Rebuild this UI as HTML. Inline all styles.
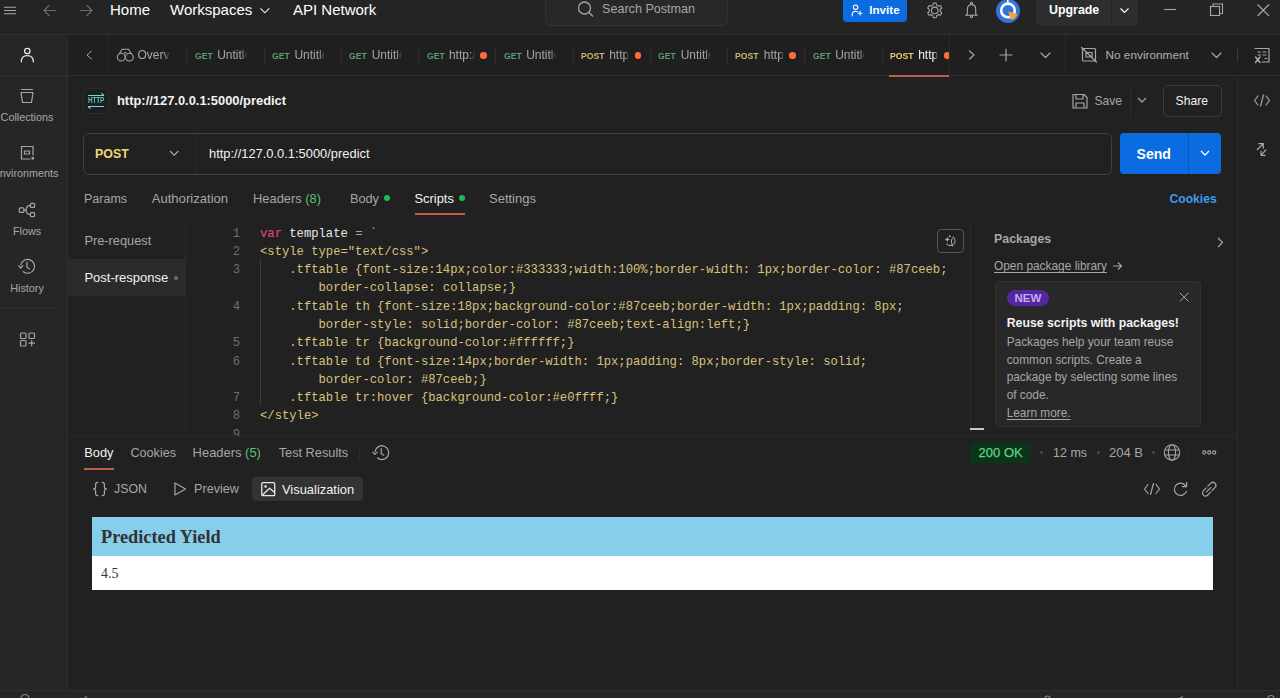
<!DOCTYPE html>
<html><head><meta charset="utf-8">
<style>
*{box-sizing:border-box;margin:0;padding:0}
html,body{width:1280px;height:698px;overflow:hidden;background:#212121;font-family:"Liberation Sans",sans-serif;color:#fff}
.a{position:absolute;white-space:nowrap}
.ln{position:absolute;background:#303030}
.g{color:#a6a6a6}
svg{position:absolute;overflow:visible}
.mono{font-family:"Liberation Mono",monospace}
</style></head><body>

<!-- TOP BAR -->
<div class="a" style="left:0;top:0;width:1280px;height:34px;background:#242424"></div>
<div class="a" style="left:68px;top:35px;width:1212px;height:40px;background:#1f1f1f"></div>
<div class="ln" style="left:0;top:34px;width:1280px;height:1px"></div>
<svg style="left:0;top:0" width="1280" height="34">
  <g stroke="#a6a6a6" stroke-width="1.3" fill="none">
    <path d="M4 7.3H16M4 10.5H16M4 13.7H16" stroke-width="1.1"/>
  </g>
  <g stroke="#6b6b6b" stroke-width="1.2" fill="none" stroke-linecap="round" stroke-linejoin="round">
    <path d="M56 10.5H44M49 5.5L44 10.5L49 15.5"/>
    <path d="M80 10.5H92M87 5.5L92 10.5L87 15.5"/>
  </g>
</svg>
<div class="a" style="left:110px;top:0;line-height:20px;font-size:15px">Home</div>
<div class="a" style="left:170px;top:0;line-height:20px;font-size:15px">Workspaces</div>
<svg style="left:0;top:0" width="1" height="1"><path d="M260.5 8.4L264.9 12.8L269.3 8.4" stroke="#f0f0f0" stroke-width="1.1" fill="none"/></svg>
<div class="a" style="left:293px;top:0;line-height:20px;font-size:15px">API Network</div>

<div class="a" style="left:545px;top:-8px;width:183px;height:34px;background:#282828;border:1px solid #343434;border-radius:6px"></div>
<svg style="left:0;top:0" width="1" height="1"><g stroke="#a6a6a6" stroke-width="1.3" fill="none"><circle cx="584.5" cy="8" r="6"/><path d="M589 12.5L593 16.5"/></g></svg>
<div class="a g" style="left:602px;top:-1px;line-height:20px;font-size:12.6px">Search Postman</div>

<div class="a" style="left:843px;top:-6px;width:64px;height:28px;background:#0a6ce0;border-radius:4px"></div>
<svg style="left:0;top:0" width="1" height="1"><g stroke="#fff" stroke-width="1.1" fill="none"><circle cx="855.6" cy="7.2" r="2.2"/><path d="M852.2 16.2V14.6C852.2 12.6 853.7 11.3 855.6 11.3C856.5 11.3 857.2 11.6 857.8 12M857.6 13.2H862.4M860 10.8V15.6"/></g></svg>
<div class="a" style="left:869.3px;top:-0.6px;line-height:21px;font-size:11.6px;font-weight:bold">Invite</div>

<svg style="left:0;top:0" width="1" height="1"><g stroke="#a6a6a6" stroke-width="1.1" fill="none" stroke-linejoin="round">
  <path d="M932.93 5.11 L933.32 3.04 L936.18 3.04 L936.57 5.11 L938.42 6.17 L940.41 5.48 L941.84 7.96 L940.25 9.33 L940.25 11.47 L941.84 12.84 L940.41 15.32 L938.42 14.63 L936.57 15.69 L936.18 17.76 L933.32 17.76 L932.93 15.69 L931.08 14.63 L929.09 15.32 L927.66 12.84 L929.25 11.47 L929.25 9.33 L927.66 7.96 L929.09 5.48 L931.08 6.17Z"/>
  <circle cx="934.75" cy="10.4" r="3.3"/>
  <path d="M967.3 14.3V9.5C967.3 6.5 969 4.6 971.5 4.6C974 4.6 975.7 6.5 975.7 9.5V14.3L977.2 15.2H965.8Z"/>
  <circle cx="971.5" cy="3.3" r="1"/><circle cx="971.5" cy="16.6" r="1.1"/>
</g></svg>
<div class="a" style="left:996px;top:-1.5px;width:24px;height:24px;border-radius:50%;background:#3474d8"></div>
<svg style="left:0;top:0" width="1" height="1"><g fill="none" stroke="#fff" stroke-width="2.6"><circle cx="1008" cy="10.4" r="6.8"/></g><path d="M1007.8 -1V2.8" stroke="#fff" stroke-width="1.6"/><path d="M1008.3 11.2L1012.5 12.6L1017.6 14.6L1014.5 18.8L1010.5 19.8Z" fill="#f2a53a"/></svg>

<div class="a" style="left:1036px;top:-8px;width:102px;height:34px;background:#2e2e2e;border-radius:6px"></div>
<div class="ln" style="left:1111px;top:0;width:1px;height:26px;background:#262626"></div>
<div class="a" style="left:1049px;top:0;line-height:21px;font-size:12.4px;font-weight:bold">Upgrade</div>
<svg style="left:0;top:0" width="1" height="1"><g stroke="#fff" stroke-width="1.2" fill="none"><path d="M1120.5 8.5L1124.5 12.5L1128.5 8.5"/></g>
 <g stroke="#a6a6a6" stroke-width="1.1" fill="none"><path d="M1164 9.5H1176"/><rect x="1210.5" y="6.5" width="9" height="9"/><path d="M1213 6.5V4H1222.5V13.5H1219.5"/><path d="M1257.5 4.5L1269 16M1269 4.5L1257.5 16"/></g></svg>

<!-- LEFT SIDEBAR -->
<div class="a" style="left:0;top:35px;width:67px;height:655px;background:#262626"></div>
<div class="ln" style="left:67px;top:35px;width:1px;height:655px;background:#2c2c2c"></div>
<div class="ln" style="left:0;top:76px;width:67px;height:1px"></div>
<div class="ln" style="left:0;top:308px;width:56px;height:1px"></div>

<!-- BOTTOM BAR -->
<div class="a" style="left:0;top:691px;width:1280px;height:7px;background:#252525"></div>
<div class="ln" style="left:0;top:690px;width:1280px;height:1px;background:#2e2e2e"></div>
<svg style="left:0;top:0" width="1" height="1"><g stroke="#8a8a8a" stroke-width="1.2" fill="none"><path d="M21 698.5A4 4 0 0 1 29 698.5M84 698.5L87 696.5M1045 698.5A2.5 2.5 0 0 1 1050 698.5M1179 698.5L1183 696.5M1268 698.5A3 3 0 0 1 1274 698.5"/></g></svg>

<!-- TAB BAR -->
<div class="ln" style="left:68px;top:75px;width:1212px;height:1px"></div>
<div class="ln" style="left:108px;top:35px;width:1px;height:40px;background:#2a2a2a"></div>

<!-- RIGHT SIDEBAR -->
<div class="ln" style="left:1237px;top:76px;width:1px;height:614px;background:#2a2a2a"></div>

<div id="content"></div>
<!-- TAB BAR CONTENT -->
<svg style="left:0;top:0" width="1" height="1"><g stroke="#a6a6a6" stroke-width="1.2" fill="none" stroke-linecap="round" stroke-linejoin="round">
  <path d="M91.5 51L87 55L91.5 59" stroke-width="1"/>
  <circle cx="121.2" cy="57.1" r="3.9" stroke-width="1.05"/><circle cx="129.4" cy="57.1" r="3.9" stroke-width="1.05"/>
  <path d="M119.4 53.8L122 49.3H128.6L131.2 53.8" stroke-width="1.05"/><path d="M124.4 52.9L125.3 51.9L126.2 52.9Z" fill="#a6a6a6" stroke-width="0.6"/>
</g></svg>
<div class="a" style="left:137.5px;top:45px;width:32px;overflow:hidden;-webkit-mask-image:linear-gradient(90deg,#000 82%,transparent);line-height:20px;font-size:12px;color:#a6a6a6">Overview</div>
<div class="ln" style="left:186.4px;top:48px;width:1px;height:16px;background:#2c2c2c"></div>
<div class="a" style="left:194.9px;top:45.6px;line-height:20px;font-size:9.95px;font-weight:bold;color:#5c9f72;transform:scaleX(0.87);transform-origin:0 0">GET</div>
<div class="a" style="left:217.2px;top:45px;width:30.2px;overflow:hidden;-webkit-mask-image:linear-gradient(90deg,#000 82%,transparent);line-height:20px;font-size:12px;color:#a6a6a6">Untitle</div>
<div class="ln" style="left:263.6px;top:48px;width:1px;height:16px;background:#2c2c2c"></div>
<div class="a" style="left:272.1px;top:45.6px;line-height:20px;font-size:9.95px;font-weight:bold;color:#5c9f72;transform:scaleX(0.87);transform-origin:0 0">GET</div>
<div class="a" style="left:294.4px;top:45px;width:30.2px;overflow:hidden;-webkit-mask-image:linear-gradient(90deg,#000 82%,transparent);line-height:20px;font-size:12px;color:#a6a6a6">Untitle</div>
<div class="ln" style="left:340.9px;top:48px;width:1px;height:16px;background:#2c2c2c"></div>
<div class="a" style="left:349.4px;top:45.6px;line-height:20px;font-size:9.95px;font-weight:bold;color:#5c9f72;transform:scaleX(0.87);transform-origin:0 0">GET</div>
<div class="a" style="left:371.7px;top:45px;width:30.2px;overflow:hidden;-webkit-mask-image:linear-gradient(90deg,#000 82%,transparent);line-height:20px;font-size:12px;color:#a6a6a6">Untitle</div>
<div class="ln" style="left:418.1px;top:48px;width:1px;height:16px;background:#2c2c2c"></div>
<div class="a" style="left:426.6px;top:45.6px;line-height:20px;font-size:9.95px;font-weight:bold;color:#5c9f72;transform:scaleX(0.87);transform-origin:0 0">GET</div>
<div class="a" style="left:448.9px;top:45px;width:26.0px;overflow:hidden;-webkit-mask-image:linear-gradient(90deg,#000 82%,transparent);line-height:20px;font-size:12px;color:#a6a6a6">http://</div>
<div class="a" style="left:480.35px;top:52px;width:6.6px;height:6.6px;border-radius:50%;background:#ff6c37"></div>
<div class="ln" style="left:495.4px;top:48px;width:1px;height:16px;background:#2c2c2c"></div>
<div class="a" style="left:503.9px;top:45.6px;line-height:20px;font-size:9.95px;font-weight:bold;color:#5c9f72;transform:scaleX(0.87);transform-origin:0 0">GET</div>
<div class="a" style="left:526.2px;top:45px;width:30.2px;overflow:hidden;-webkit-mask-image:linear-gradient(90deg,#000 82%,transparent);line-height:20px;font-size:12px;color:#a6a6a6">Untitle</div>
<div class="ln" style="left:572.6px;top:48px;width:1px;height:16px;background:#2c2c2c"></div>
<div class="a" style="left:580.8px;top:45.6px;line-height:20px;font-size:9.95px;font-weight:bold;color:#cdb86c;transform:scaleX(0.87);transform-origin:0 0">POST</div>
<div class="a" style="left:609.2px;top:45px;width:20.2px;overflow:hidden;-webkit-mask-image:linear-gradient(90deg,#000 82%,transparent);line-height:20px;font-size:12px;color:#a6a6a6">http://</div>
<div class="a" style="left:634.85px;top:52px;width:6.6px;height:6.6px;border-radius:50%;background:#ff6c37"></div>
<div class="ln" style="left:649.9px;top:48px;width:1px;height:16px;background:#2c2c2c"></div>
<div class="a" style="left:658.4px;top:45.6px;line-height:20px;font-size:9.95px;font-weight:bold;color:#5c9f72;transform:scaleX(0.87);transform-origin:0 0">GET</div>
<div class="a" style="left:680.7px;top:45px;width:30.2px;overflow:hidden;-webkit-mask-image:linear-gradient(90deg,#000 82%,transparent);line-height:20px;font-size:12px;color:#a6a6a6">Untitle</div>
<div class="ln" style="left:727.1px;top:48px;width:1px;height:16px;background:#2c2c2c"></div>
<div class="a" style="left:735.2px;top:45.6px;line-height:20px;font-size:9.95px;font-weight:bold;color:#cdb86c;transform:scaleX(0.87);transform-origin:0 0">POST</div>
<div class="a" style="left:763.8px;top:45px;width:20.2px;overflow:hidden;-webkit-mask-image:linear-gradient(90deg,#000 82%,transparent);line-height:20px;font-size:12px;color:#a6a6a6">http://</div>
<div class="a" style="left:789.35px;top:52px;width:6.6px;height:6.6px;border-radius:50%;background:#ff6c37"></div>
<div class="ln" style="left:804.4px;top:48px;width:1px;height:16px;background:#2c2c2c"></div>
<div class="a" style="left:812.9px;top:45.6px;line-height:20px;font-size:9.95px;font-weight:bold;color:#5c9f72;transform:scaleX(0.87);transform-origin:0 0">GET</div>
<div class="a" style="left:835.2px;top:45px;width:30.2px;overflow:hidden;-webkit-mask-image:linear-gradient(90deg,#000 82%,transparent);line-height:20px;font-size:12px;color:#a6a6a6">Untitle</div>
<div class="ln" style="left:881.6px;top:48px;width:1px;height:16px;background:#2c2c2c"></div>
<div class="a" style="left:889.8px;top:45.6px;line-height:20px;font-size:9.95px;font-weight:bold;color:#e9cf74;transform:scaleX(0.87);transform-origin:0 0">POST</div>
<div class="a" style="left:918.2px;top:45px;width:20.2px;overflow:hidden;-webkit-mask-image:linear-gradient(90deg,#000 82%,transparent);line-height:20px;font-size:12px;color:#f2f2f2">http://</div>
<div class="a" style="left:943.80px;top:52px;width:4.8px;height:6.6px;overflow:hidden"><div style="width:6.6px;height:6.6px;border-radius:50%;background:#ff6c37"></div></div>
<div class="ln" style="left:948.5px;top:35px;width:1px;height:40px;background:#2a2a2a"></div>
<div class="a" style="left:889px;top:75px;width:59.5px;height:2px;background:#bd5f47"></div>
<div class="ln" style="left:1065px;top:35px;width:1px;height:40px;background:#2a2a2a"></div>
<svg style="left:0;top:0" width="1" height="1"><g stroke="#a6a6a6" stroke-width="1.2" fill="none" stroke-linecap="round" stroke-linejoin="round">
  <path d="M969.5 51L974 55L969.5 59"/>
  <path d="M1006 49V61M1000 55H1012"/>
  <path d="M1041 53L1045.5 57.5L1050 53"/>
  <path d="M1212 53L1216.5 57.5L1221 53"/>
  <rect x="1082.5" y="48.5" width="13" height="12.5" rx="1"/><path d="M1081.5 47.5L1096.5 62M1086 52.5H1092V57H1086Z"/>
  <path d="M1255 48.5H1269V62H1262M1258 52H1260.5M1263 52H1266M1258 55H1260.5M1263 55H1266M1265 58.5H1267"/><path d="M1255.5 57L1260 62.5M1260 57L1255.5 62.5" stroke="#bbb"/>
</g></svg>
<div class="a" style="left:1105.5px;top:45px;line-height:20px;font-size:11.8px;color:#b0b0b0">No environment</div>
<div class="ln" style="left:1237px;top:47px;width:1px;height:15px;background:#3a3a3a"></div>

<!-- SIDEBAR ICONS -->
<svg style="left:0;top:0" width="1" height="1"><g stroke="#e6e6e6" stroke-width="1.3" fill="none" stroke-linecap="round" stroke-linejoin="round">
  <circle cx="27.3" cy="51" r="2.7"/><path d="M21.3 61.8C21.3 57.5 24 55.7 27.3 55.7C30.6 55.7 33.3 57.5 33.3 61.8"/>
</g><g stroke="#a6a6a6" stroke-width="1.2" fill="none" stroke-linecap="round" stroke-linejoin="round">
  <path d="M21.5 89.5H32.5M21 92.5H33L31.5 102.5H22.5Z"/>
  <path d="M30 159H21.5V146.5H33V155M24.5 151H29.5V154H24.5Z"/><rect x="31.5" y="157" width="2.5" height="2.5" fill="#a6a6a6" stroke="none"/>
  <rect x="19.3" y="207.8" width="4.6" height="4.6" rx="1"/><rect x="30.4" y="203.4" width="4.2" height="4" rx="1"/><rect x="30.4" y="212.6" width="4.2" height="4" rx="1"/><path d="M23.9 210.1H26.2M26.2 210.1C26.2 207 27 205.4 30.4 205.4M26.2 210.1C26.2 213.2 27 214.6 30.4 214.6"/>
  <path d="M23.3 271.7A6.9 6.9 0 1 0 20.9 265M18.7 265.8L20.7 268L22.9 265.8M27 262.3V267.3L29.5 268.9"/>
  <rect x="20.5" y="333" width="5.5" height="5.5" rx="1"/><rect x="29" y="333" width="5.5" height="5.5" rx="1"/><rect x="20.5" y="340.5" width="5.5" height="5.5" rx="1"/><path d="M31.7 340.5V346M29 343.2H34.5"/>
</g></svg>
<div class="a" style="left:0;top:110px;width:54px;text-align:center;line-height:14px;font-size:10.8px;color:#a6a6a6">Collections</div>
<div class="a" style="left:-7.5px;top:166px;line-height:14px;font-size:10.8px;color:#a6a6a6">Environments</div>
<div class="a" style="left:0;top:224px;width:54px;text-align:center;line-height:14px;font-size:10.8px;color:#a6a6a6">Flows</div>
<div class="a" style="left:0;top:281px;width:54px;text-align:center;line-height:14px;font-size:10.8px;color:#a6a6a6">History</div>

<!-- REQUEST HEADER -->
<div class="a" style="left:83px;top:88px;width:26px;height:25.5px;background:#1f1f1f;border:1px solid #2c2c2c;border-radius:5px"></div>
<svg style="left:0;top:0" width="1" height="1"><g stroke="#7fd6cf" stroke-width="1.1" fill="none">
  <path d="M88 95.5H104M101.5 93.3L104 95.5M88 106.5H104M90.5 108.7L88 106.5"/>
</g></svg>
<div class="a" style="left:88px;top:96px;line-height:9px;font-size:8.4px;font-weight:bold;color:#4cc5bd;transform:scaleX(0.76);transform-origin:0 0;letter-spacing:-0.2px">HTTP</div>
<div class="a" style="left:117px;top:91px;line-height:20px;font-size:12.9px;font-weight:bold;color:#f2f2f2">http://127.0.0.1:5000/predict</div>
<svg style="left:0;top:0" width="1" height="1"><g stroke="#a6a6a6" stroke-width="1.2" fill="none" stroke-linejoin="round">
  <path d="M1073 94.5H1084L1087 97.5V108H1073Z M1076 94.5V99H1083V94.5 M1076 108V103H1084V108"/>
  <path d="M1138 98L1142 102L1146 98"/>
</g></svg>
<div class="a" style="left:1094.5px;top:90.5px;line-height:20px;font-size:12.1px;color:#a6a6a6">Save</div>
<div class="ln" style="left:1130px;top:84px;width:1px;height:33px;background:#2c2c2c"></div>
<div class="a" style="left:1162.5px;top:85px;width:59px;height:31.5px;border:1px solid #3c3c3c;border-radius:5px"></div>
<div class="a" style="left:1175.5px;top:90.5px;line-height:20px;font-size:12.2px;color:#f2f2f2">Share</div>

<!-- URL BAR -->
<div class="a" style="left:83px;top:133px;width:1029px;height:41.7px;border:1px solid #404040;border-radius:6px"></div>
<div class="ln" style="left:196px;top:134px;width:1px;height:39.5px;background:#2c2c2c"></div>
<div class="a" style="left:95px;top:143.5px;line-height:20px;font-size:12.4px;font-weight:bold;color:#f0d878">POST</div>
<svg style="left:0;top:0" width="1" height="1"><g stroke="#a6a6a6" stroke-width="1.2" fill="none"><path d="M170 151L174.2 155.2L178.4 151"/></g></svg>
<div class="a" style="left:209px;top:143.5px;line-height:20px;font-size:12.9px;color:#f2f2f2">http://127.0.0.1:5000/predict</div>
<div class="a" style="left:1120px;top:133.3px;width:101px;height:40.3px;background:#0a6ce0;border-radius:4px"></div>
<div class="ln" style="left:1188px;top:133.3px;width:1px;height:40.3px;background:#0a58b0"></div>
<div class="a" style="left:1136.5px;top:143.5px;line-height:20px;font-size:14.1px;font-weight:bold;color:#fff">Send</div>
<svg style="left:0;top:0" width="1" height="1"><g stroke="#fff" stroke-width="1.3" fill="none"><path d="M1201 151L1205 155L1209 151"/></g></svg>

<!-- REQUEST TABS -->
<div class="a" style="left:84px;top:188.7px;line-height:20px;font-size:12.5px;color:#a6a6a6">Params</div>
<div class="a" style="left:151.7px;top:188.7px;line-height:20px;font-size:13.1px;color:#a6a6a6">Authorization</div>
<div class="a" style="left:253px;top:188.7px;line-height:20px;font-size:12.9px;color:#a6a6a6">Headers <span style="color:#5fbf7a">(8)</span></div>
<div class="a" style="left:350px;top:188.7px;line-height:20px;font-size:12.7px;color:#a6a6a6">Body</div>
<div class="a" style="left:384px;top:195.3px;width:6.2px;height:6.2px;border-radius:50%;background:#1fb955"></div>
<div class="a" style="left:414.5px;top:188.7px;line-height:20px;font-size:12.9px;color:#f2f2f2">Scripts</div>
<div class="a" style="left:458.5px;top:195.3px;width:6.2px;height:6.2px;border-radius:50%;background:#1fb955"></div>
<div class="a" style="left:489px;top:188.7px;line-height:20px;font-size:13px;color:#a6a6a6">Settings</div>
<div class="a" style="left:414.5px;top:213px;width:50.5px;height:2px;background:#bd5f47"></div>
<div class="a" style="left:1169.6px;top:188.7px;line-height:20px;font-size:12.1px;font-weight:bold;color:#3d9bf0">Cookies</div>

<!-- SCRIPTS LEFT NAV -->
<div class="ln" style="left:184.5px;top:222px;width:1px;height:215px;background:#2a2a2a"></div>
<div class="a" style="left:84.4px;top:231px;line-height:20px;font-size:12.8px;color:#a6a6a6">Pre-request</div>
<div class="a" style="left:68px;top:259px;width:116.5px;height:37px;background:#2b2b2b"></div>
<div class="a" style="left:84.4px;top:268px;line-height:20px;font-size:13px;color:#f2f2f2">Post-response</div>
<div class="a" style="left:174px;top:275.5px;width:4px;height:4px;border-radius:50%;background:#6e6e6e"></div>

<!-- CODE -->
<div class="ln" style="left:260px;top:258.5px;width:1px;height:146px;background:#3a3a3a"></div>
<div class="a mono" style="left:200px;top:224.60px;width:40px;text-align:right;line-height:18.2px;font-size:12.2px;color:#6e6e6e">1</div>
<div class="a mono" style="left:260px;top:224.60px;line-height:18.2px;font-size:12.2px;color:#d8c27c;white-space:pre"><span style="color:#e8457a">var</span> <span style="color:#e8e8e8">template</span> <span style="color:#a6a6a6">=</span> <span style="color:#d8c27c">`</span></div>
<div class="a mono" style="left:200px;top:242.88px;width:40px;text-align:right;line-height:18.2px;font-size:12.2px;color:#6e6e6e">2</div>
<div class="a mono" style="left:260px;top:242.88px;line-height:18.2px;font-size:12.2px;color:#d8c27c;white-space:pre">&lt;style type="text/css"&gt;</div>
<div class="a mono" style="left:200px;top:261.16px;width:40px;text-align:right;line-height:18.2px;font-size:12.2px;color:#6e6e6e">3</div>
<div class="a mono" style="left:260px;top:261.16px;line-height:18.2px;font-size:12.2px;color:#d8c27c;white-space:pre">    .tftable {font-size:14px;color:#333333;width:100%;border-width: 1px;border-color: #87ceeb;</div>
<div class="a mono" style="left:260px;top:279.44px;line-height:18.2px;font-size:12.2px;color:#d8c27c;white-space:pre">        border-collapse: collapse;}</div>
<div class="a mono" style="left:200px;top:297.72px;width:40px;text-align:right;line-height:18.2px;font-size:12.2px;color:#6e6e6e">4</div>
<div class="a mono" style="left:260px;top:297.72px;line-height:18.2px;font-size:12.2px;color:#d8c27c;white-space:pre">    .tftable th {font-size:18px;background-color:#87ceeb;border-width: 1px;padding: 8px;</div>
<div class="a mono" style="left:260px;top:316.00px;line-height:18.2px;font-size:12.2px;color:#d8c27c;white-space:pre">        border-style: solid;border-color: #87ceeb;text-align:left;}</div>
<div class="a mono" style="left:200px;top:334.28px;width:40px;text-align:right;line-height:18.2px;font-size:12.2px;color:#6e6e6e">5</div>
<div class="a mono" style="left:260px;top:334.28px;line-height:18.2px;font-size:12.2px;color:#d8c27c;white-space:pre">    .tftable tr {background-color:#ffffff;}</div>
<div class="a mono" style="left:200px;top:352.56px;width:40px;text-align:right;line-height:18.2px;font-size:12.2px;color:#6e6e6e">6</div>
<div class="a mono" style="left:260px;top:352.56px;line-height:18.2px;font-size:12.2px;color:#d8c27c;white-space:pre">    .tftable td {font-size:14px;border-width: 1px;padding: 8px;border-style: solid;</div>
<div class="a mono" style="left:260px;top:370.84px;line-height:18.2px;font-size:12.2px;color:#d8c27c;white-space:pre">        border-color: #87ceeb;}</div>
<div class="a mono" style="left:200px;top:389.12px;width:40px;text-align:right;line-height:18.2px;font-size:12.2px;color:#6e6e6e">7</div>
<div class="a mono" style="left:260px;top:389.12px;line-height:18.2px;font-size:12.2px;color:#d8c27c;white-space:pre">    .tftable tr:hover {background-color:#e0ffff;}</div>
<div class="a mono" style="left:200px;top:407.40px;width:40px;text-align:right;line-height:18.2px;font-size:12.2px;color:#6e6e6e">8</div>
<div class="a mono" style="left:260px;top:407.40px;line-height:18.2px;font-size:12.2px;color:#d8c27c;white-space:pre">&lt;/style&gt;</div>
<div class="a mono" style="left:200px;top:425.68px;width:40px;text-align:right;line-height:18.2px;font-size:12.2px;color:#6e6e6e">9</div>
<div class="a" style="left:937.4px;top:229px;width:26.3px;height:23.9px;border:1.2px solid #555;border-radius:4px"></div>
<svg style="left:0;top:0" width="1" height="1"><g stroke="#b4b4b4" stroke-width="1" fill="none" stroke-linecap="round">
  <path d="M953.3 236.9A4.9 4.9 0 1 1 946.6 244"/><path d="M953.3 237.3C951 239.2 950.6 242.5 952.8 246.2"/>
</g><g fill="#b4b4b4"><path d="M947.3 237L948.1 238.7L949.8 239.5L948.1 240.3L947.3 242L946.5 240.3L944.8 239.5L946.5 238.7Z"/><path d="M949.8 235L950.3 235.8L951.1 236.3L950.3 236.8L949.8 237.6L949.3 236.8L948.5 236.3L949.3 235.8Z"/></g></svg>

<!-- PACKAGES -->
<div class="ln" style="left:970px;top:222px;width:1px;height:215px;background:#2a2a2a"></div>
<div class="a" style="left:994px;top:229px;line-height:20px;font-size:12.4px;font-weight:bold;color:#a6a6a6">Packages</div>
<svg style="left:0;top:0" width="1" height="1"><g stroke="#a6a6a6" stroke-width="1.2" fill="none"><path d="M1218 238L1222.5 242.5L1218 247"/><path d="M1113 266H1121.5M1118 262.5L1121.5 266L1118 269.5"/></g></svg>
<div class="a" style="left:994px;top:256px;line-height:20px;font-size:11.9px;color:#a6a6a6;text-decoration:underline;text-underline-offset:2px">Open package library</div>
<div class="a" style="left:994.5px;top:281.2px;width:206px;height:146px;background:#282828;border:1px solid #2f2f2f;border-radius:4px"></div>
<div class="a" style="left:1006.7px;top:290px;width:42.5px;height:15.5px;border-radius:8px;background:#53289f"></div>
<div class="a" style="left:1014.5px;top:288px;line-height:20px;font-size:11.5px;font-weight:bold;color:#c6aef2">NEW</div>
<svg style="left:0;top:0" width="1" height="1"><g stroke="#a6a6a6" stroke-width="1.2" fill="none"><path d="M1179.8 292.8L1188.5 301.5M1188.5 292.8L1179.8 301.5" stroke-width="1"/></g></svg>
<div class="a" style="left:1006.7px;top:312.5px;line-height:20px;font-size:12.3px;font-weight:bold;color:#f2f2f2">Reuse scripts with packages!</div>
<div class="a" style="left:1006.7px;top:333.6px;line-height:17.9px;font-size:11.85px;color:#a6a6a6;white-space:pre">Packages help your team reuse
common scripts. Create a
package by selecting some lines
of code.
<span style="text-decoration:underline;text-underline-offset:2px">Learn more.</span></div>
<div class="a" style="left:970px;top:428px;width:14px;height:2px;background:#c8c8c8"></div>

<div class="a" style="left:185px;top:436px;width:785px;height:2px;background:#212121"></div>
<div class="ln" style="left:68px;top:436px;width:1169px;height:1px;background:#2a2a2a"></div>

<!-- RESPONSE -->
<div class="a" style="left:84.3px;top:442.6px;line-height:20px;font-size:12.8px;color:#f2f2f2">Body</div>
<div class="a" style="left:84px;top:467.5px;width:30px;height:2px;background:#bd5f47"></div>
<div class="a" style="left:130.5px;top:442.6px;line-height:20px;font-size:12.6px;color:#a6a6a6">Cookies</div>
<div class="a" style="left:192.6px;top:442.6px;line-height:20px;font-size:12.95px;color:#a6a6a6">Headers <span style="color:#5fbf7a">(5)</span></div>
<div class="a" style="left:278.7px;top:442.6px;line-height:20px;font-size:12.75px;color:#a6a6a6">Test Results</div>
<div class="ln" style="left:359px;top:445px;width:1px;height:15px;background:#2c2c2c"></div>
<svg style="left:0;top:0" width="1" height="1"><g stroke="#a6a6a6" stroke-width="1.2" fill="none" stroke-linecap="round" stroke-linejoin="round">
  <path d="M377.5 458A6.9 6.9 0 1 0 375.1 451.3M372.9 452.1L374.9 454.3L377.1 452.1M381.2 448.6V453.6L383.7 455.2"/>
</g></svg>

<div class="a" style="left:970px;top:443px;width:61px;height:19.5px;background:#0b3519;border-radius:3px"></div>
<div class="a" style="left:978.6px;top:442.7px;line-height:20px;font-size:13px;color:#62d283;-webkit-text-stroke:0.25px #62d283">200 OK</div>
<div class="a" style="left:1039.5px;top:451px;width:3px;height:3px;border-radius:50%;background:#4a4a4a"></div>
<div class="a" style="left:1053px;top:442.7px;line-height:20px;font-size:12.5px;color:#a6a6a6">12 ms</div>
<div class="a" style="left:1096.5px;top:451px;width:3px;height:3px;border-radius:50%;background:#4a4a4a"></div>
<div class="a" style="left:1109px;top:442.7px;line-height:20px;font-size:13px;color:#a6a6a6">204 B</div>
<div class="a" style="left:1151.5px;top:451px;width:3px;height:3px;border-radius:50%;background:#4a4a4a"></div>
<svg style="left:0;top:0" width="1" height="1"><g stroke="#a6a6a6" stroke-width="1.1" fill="none">
  <circle cx="1172" cy="452.5" r="7.7"/><ellipse cx="1172" cy="452.5" rx="3.6" ry="7.7"/><path d="M1164.5 450H1179.5M1164.5 455H1179.5"/>
  <circle cx="1204.2" cy="452.5" r="1.6"/><circle cx="1209.2" cy="452.5" r="1.6"/><circle cx="1214.2" cy="452.5" r="1.6"/>
</g></svg>
<div class="ln" style="left:1188px;top:445px;width:1px;height:15px;background:#2c2c2c"></div>

<svg style="left:0;top:0" width="1" height="1"><g stroke="#a6a6a6" stroke-width="1.2" fill="none" stroke-linecap="round" stroke-linejoin="round">
  <path d="M97.8 482.3C96 482.3 95.6 483 95.6 484.5V487C95.6 488.3 95 489 93.3 489C95 489 95.6 489.7 95.6 491V493.5C95.6 495 96 495.7 97.8 495.7M102.2 482.3C104 482.3 104.4 483 104.4 484.5V487C104.4 488.3 105 489 106.7 489C105 489 104.4 489.7 104.4 491V493.5C104.4 495 104 495.7 102.2 495.7"/>
  <path d="M175 483V495L185.5 489Z"/>
  <path d="M1148 484.5L1144.5 489L1148 493.5M1156 484.5L1159.5 489L1156 493.5M1153.5 483.5L1150.5 494.5"/>
  <path d="M1186.4 491.4A6.2 6.2 0 1 1 1185.6 485.6M1186.6 482.3V486.6H1182.4"/>
  <path d="M1207.8 486.2L1210.6 483.4C1211.9 482.1 1213.8 482.1 1215 483.3C1216.2 484.5 1216.2 486.4 1214.9 487.7L1212.1 490.5M1210.6 492.2L1207.8 495C1206.5 496.3 1204.6 496.3 1203.4 495.1C1202.2 493.9 1202.2 492 1203.5 490.7L1206.3 487.9M1206.6 491.8L1211 487.4"/>
</g></svg>
<div class="a" style="left:114px;top:479px;line-height:20px;font-size:12.4px;color:#a6a6a6">JSON</div>
<div class="a" style="left:194px;top:479px;line-height:20px;font-size:12.65px;color:#a6a6a6">Preview</div>
<div class="a" style="left:252px;top:477.4px;width:110.7px;height:23.6px;background:#333;border-radius:4px"></div>
<svg style="left:0;top:0" width="1" height="1"><g stroke="#e6e6e6" stroke-width="1.2" fill="none" stroke-linejoin="round">
  <rect x="261.8" y="482.7" width="12.9" height="12.9" rx="1.2" stroke-width="1.3"/><path d="M262.3 495.2L269.6 488.2L274.6 492.6" stroke-width="1.3"/><circle cx="265.6" cy="486.5" r="1.3" fill="#e6e6e6" stroke="none"/>
</g></svg>
<div class="a" style="left:282px;top:479.7px;line-height:20px;font-size:12.9px;color:#f2f2f2">Visualization</div>

<!-- TABLE -->
<div class="a" style="left:92px;top:517px;width:1121px;height:73px;background:#fff"></div>
<div class="a" style="left:92px;top:517px;width:1121px;height:38.8px;background:#87ceeb"></div>
<div class="a" style="left:101px;top:527px;line-height:20px;font-size:18.3px;font-weight:bold;color:#333;font-family:'Liberation Serif',serif">Predicted Yield</div>
<div class="a" style="left:101px;top:565px;line-height:18px;font-size:13.9px;color:#333;font-family:'Liberation Serif',serif">4.5</div>

<!-- RIGHT SIDEBAR ICONS -->
<svg style="left:0;top:0" width="1" height="1"><g stroke="#a6a6a6" stroke-width="1.2" fill="none" stroke-linecap="round" stroke-linejoin="round">
  <path d="M1258 96L1254.5 100.5L1258 105M1266 96L1269.5 100.5L1266 105M1263.5 95L1260.5 106"/>
  <path d="M1257.3 149.5L1263.3 143.7M1258.7 143.7H1263.3V148.2M1265.8 150L1261 155.3M1261 151V155.3H1265.2"/>
</g></svg>

</body></html>
